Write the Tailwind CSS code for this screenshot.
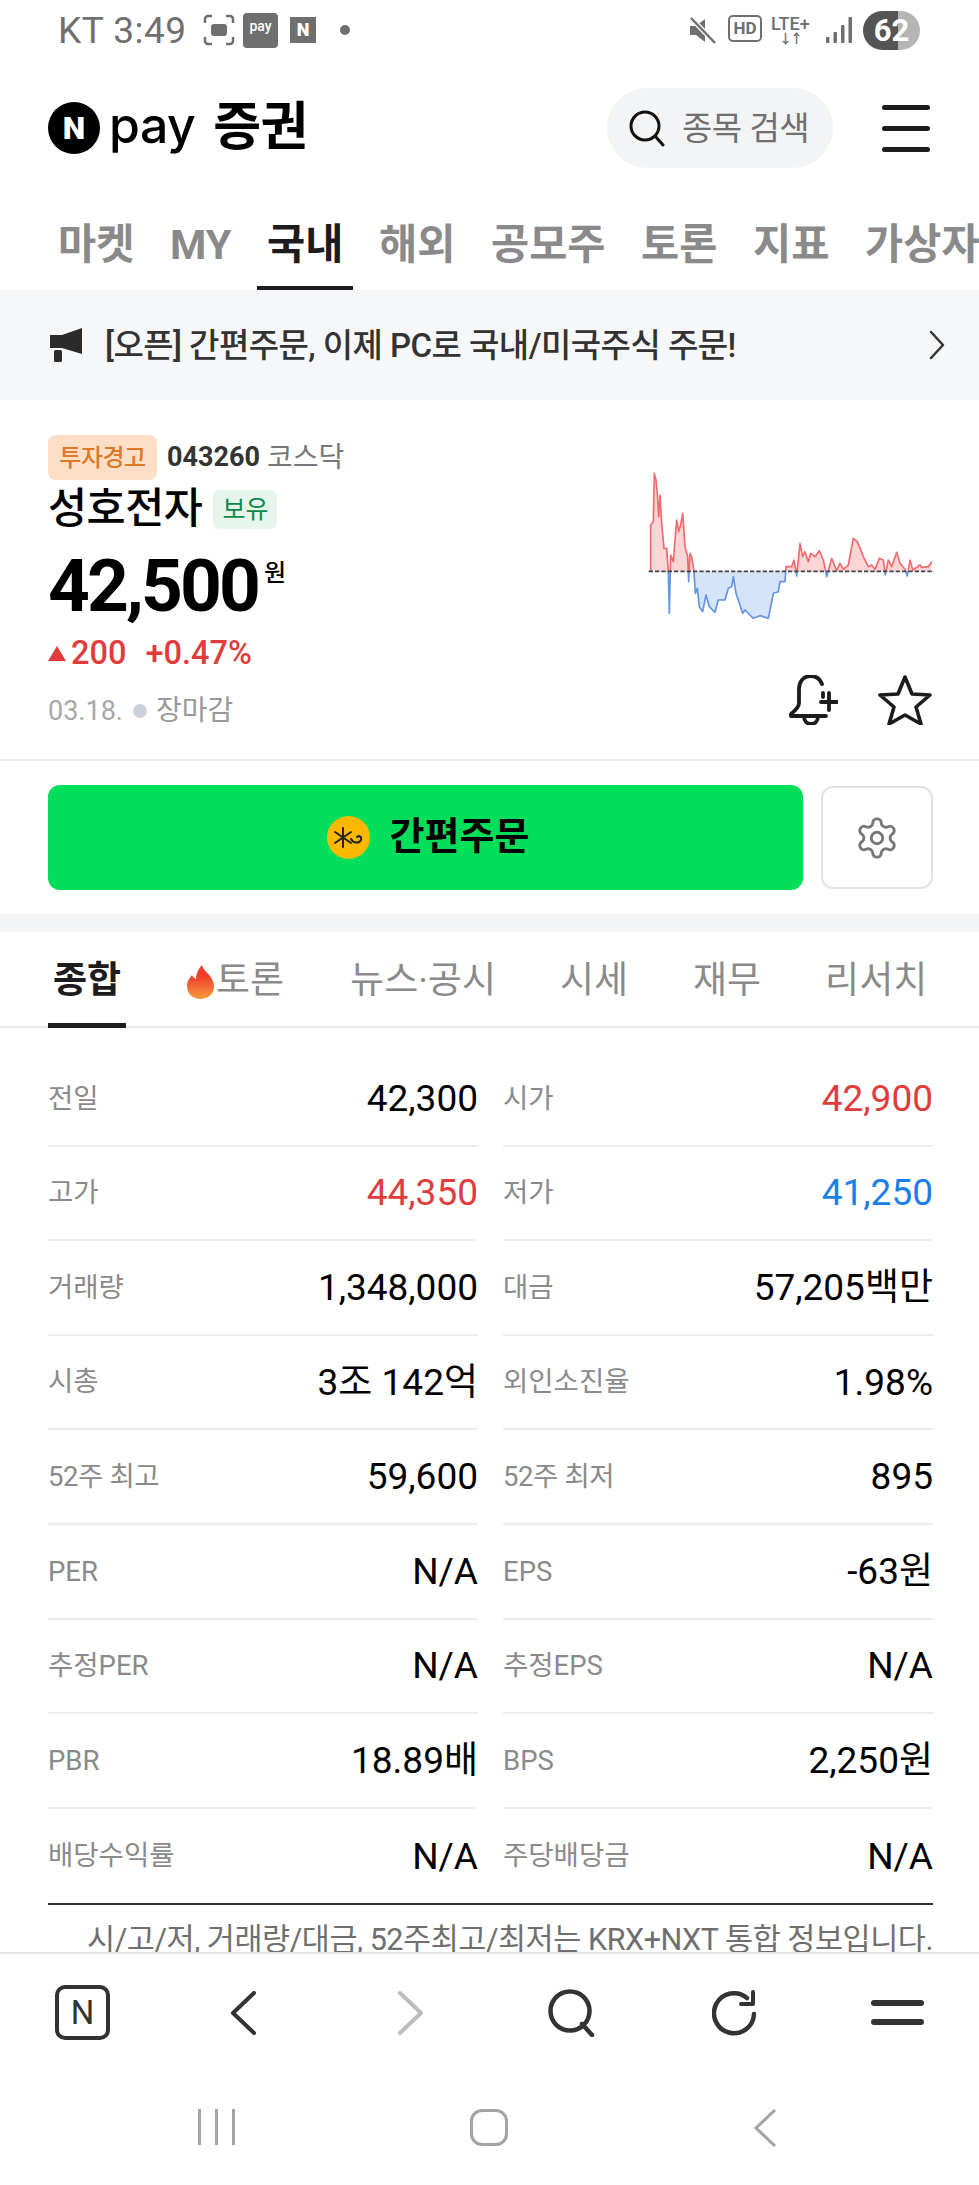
<!DOCTYPE html>
<html lang="ko">
<head>
    <meta charset="UTF-8">
    <meta name="viewport" content="width=device-width, initial-scale=1.0">
    <title>성호전자 - Npay 증권</title>
    <script src="https://cdn.jsdelivr.net/npm/@tailwindcss/browser@4"></script>
</head>
<body class="bg-white font-['Roboto','Noto_Sans_CJK_KR',sans-serif] text-black">
<div class="flex flex-col w-[979px] h-[2185px] overflow-hidden">

    <!-- status bar -->
    <div class="flex items-center justify-between h-[60px] pl-[58px] pr-[59px] text-[#6f6f6f] shrink-0">
        <div class="flex items-center">
            <span class="text-[37px] leading-none tracking-[0.5px] w-[145px] whitespace-nowrap">KT 3:49</span>
            <svg class="w-[32px] h-[32px]" viewBox="0 0 32 32" fill="none" stroke="#6f6f6f" stroke-width="2.5">
                <path d="M2 9V5a3 3 0 0 1 3-3h4M23 2h4a3 3 0 0 1 3 3v4M30 23v4a3 3 0 0 1-3 3h-4M9 30H5a3 3 0 0 1-3-3v-4"/>
                <rect x="8" y="10" width="16" height="12" rx="3" fill="#6f6f6f" stroke="none"/>
            </svg>
            <span class="flex items-start justify-center ml-[8px] w-[35px] h-[35px] pt-[6px] rounded-[4px] bg-[#6f6f6f] text-white text-[14px] leading-none font-medium">pay</span>
            <span class="flex items-center justify-center ml-[12px] w-[26px] h-[26px] bg-[#6f6f6f] text-white text-[18px] leading-none font-black">N</span>
            <span class="ml-[24px] w-[10px] h-[10px] rounded-full bg-[#6f6f6f]"></span>
        </div>
        <div class="flex items-center">
            <svg class="w-[27px] h-[27px]" viewBox="0 0 27 27" fill="none">
                <path d="M1 9h6l9-7v23l-9-7H1z" fill="#6f6f6f"/>
                <path d="M2 1l24 25" stroke="#fff" stroke-width="5"/>
                <path d="M2 1l24 25" stroke="#6f6f6f" stroke-width="2.5"/>
            </svg>
            <span class="relative flex items-center justify-center ml-[12px] w-[34px] h-[27px] mb-[3px] rounded-[5px] border-2 border-[#6f6f6f] text-[17px] leading-none font-bold">HD</span>
            <span class="relative ml-[9px] w-[46px] h-[30px] text-[18px] leading-none font-medium">LTE+<span class="absolute left-[8px] top-[17px] text-[13px] leading-none font-bold tracking-[-2px]">↓↑</span></span>
            <svg class="ml-[9px] w-[26px] h-[26px]" viewBox="0 0 26 26" fill="#6f6f6f">
                <rect x="0" y="20" width="3.5" height="6" rx="1"/>
                <rect x="7.5" y="15" width="3.5" height="11" rx="1"/>
                <rect x="15" y="8" width="3.5" height="18" rx="1"/>
                <rect x="22.5" y="0" width="3.5" height="26" rx="1"/>
            </svg>
            <span class="relative flex items-center justify-center ml-[11px] w-[57px] h-[39px] rounded-full bg-[linear-gradient(90deg,#555_61%,#b5b5b5_61%)] text-white text-[31px] leading-none font-bold">62</span>
        </div>
    </div>

    <!-- header -->
    <header class="flex items-center justify-between h-[136px] pl-[48px] pr-[49px] shrink-0">
        <div class="flex items-center">
            <span class="flex items-center justify-center w-[52px] h-[52px] rounded-full bg-black text-white text-[32px] leading-none font-black">N</span>
            <span class="ml-[9px] font-['Inter',sans-serif] text-[50px] leading-none font-medium tracking-[-0.5px] pb-[6px]">pay</span>
            <span class="ml-[18px] text-[52px] leading-none font-bold tracking-[-0.5px]">증권</span>
        </div>
        <div class="flex items-center">
            <div class="flex items-center w-[226px] h-[80px] pl-[21px] rounded-full bg-[#f3f4f6]">
                <svg class="w-[38px] h-[38px]" viewBox="0 0 38 38" fill="none" stroke="#111" stroke-width="3" stroke-linecap="round">
                    <circle cx="17" cy="17" r="14"/>
                    <path d="M27 27l8 9"/>
                </svg>
                <span class="ml-[16px] text-[33px] leading-none text-[#6f6f6f] tracking-[-0.5px]">종목 검색</span>
            </div>
            <div class="flex flex-col gap-[16px] ml-[49px] w-[48px]">
                <span class="h-[5px] rounded-full bg-[#1c1c1e]"></span>
                <span class="h-[5px] rounded-full bg-[#1c1c1e]"></span>
                <span class="h-[5px] rounded-full bg-[#1c1c1e]"></span>
            </div>
        </div>
    </header>

    <!-- top tabs -->
    <nav class="flex gap-[15.600px] h-[94px] pl-[48px] shrink-0 overflow-hidden text-[41.500px] leading-none font-bold text-[#8a8a8a] whitespace-nowrap">
        <a class="flex items-start px-[10px] pt-[28px]">마켓</a>
        <a class="flex items-start px-[10px] pt-[28px]">MY</a>
        <a class="flex items-start px-[10px] pt-[28px] h-[94px] border-b-[4px] border-[#1c1c1e] text-[#1c1c1e]">국내</a>
        <a class="flex items-start px-[10px] pt-[28px]">해외</a>
        <a class="flex items-start px-[10px] pt-[28px]">공모주</a>
        <a class="flex items-start px-[10px] pt-[28px]">토론</a>
        <a class="flex items-start px-[10px] pt-[28px]">지표</a>
        <a class="flex items-start px-[10px] pt-[28px]">가상자산</a>
    </nav>

    <!-- notice banner -->
    <div class="flex items-center justify-between h-[110px] pl-[50px] pr-[34px] bg-[#f6f7f9] shrink-0">
        <div class="flex items-center">
            <svg class="w-[32px] h-[34px]" viewBox="0 0 32 34" fill="#2b2b2b">
                <path d="M0 7h12L32 0v26l-20-6H0z"/>
                <rect x="4" y="22" width="8" height="12" rx="1.5"/>
            </svg>
            <span class="ml-[23px] text-[33px] leading-none font-medium text-[#333] tracking-[-0.55px]">[오픈] 간편주문, 이제 PC로 국내/미국주식 주문!</span>
        </div>
        <svg class="w-[16px] h-[30px]" viewBox="0 0 16 30" fill="none" stroke="#333" stroke-width="2.5" stroke-linecap="round" stroke-linejoin="round">
            <path d="M2 2l12 13L2 28"/>
        </svg>
    </div>

    <main class="flex-1 min-h-0 overflow-hidden">
        <!-- stock summary -->
        <section class="flex justify-between h-[361px] pl-[48px] border-b-2 border-[#eeeeee]">
            <div class="pt-[35px]">
                <div class="flex items-center">
                    <span class="flex items-center justify-center w-[109px] h-[45px] rounded-[8px] bg-[#fddfc7] text-[#e0782a] text-[24px] leading-none font-medium tracking-[-0.5px]">투자경고</span>
                    <span class="ml-[10px] text-[27px] leading-none font-bold text-[#333]">043260</span>
                    <span class="ml-[7px] text-[28px] leading-none text-[#777]">코스닥</span>
                </div>
                <div class="flex items-center mt-[8px]">
                    <span class="text-[42.500px] leading-[42px] font-medium tracking-[-0.5px]">성호전자</span>
                    <span class="flex items-center justify-center ml-[11px] w-[64px] h-[39px] rounded-[6px] bg-[#e6f6ec] text-[#0d8a4a] text-[25px] leading-none">보유</span>
                </div>
                <div class="flex items-start mt-[21px]">
                    <span class="text-[73px] leading-[70px] font-bold tracking-[-2.900px]">42,500</span>
                    <span class="ml-[6px] mt-[10px] text-[24px] leading-none font-medium">원</span>
                </div>
                <div class="flex items-center mt-[12px] text-[#e03c3c] text-[32.500px] leading-[40px] font-medium">
                    <svg class="w-[18px] h-[15px]" viewBox="0 0 18 15" fill="#e03c3c"><path d="M9 0l9 15H0z"/></svg>
                    <span class="ml-[5px]">200</span>
                    <span class="ml-[19px]">+0.47%</span>
                </div>
                <div class="flex items-center mt-[18px] text-[#a8a8a8] text-[27px] leading-[40px]">
                    <span>03.18.</span>
                    <span class="ml-[10px] w-[14px] h-[14px] rounded-full bg-[#ccd1d9]"></span>
                    <span class="ml-[9px] text-[28px] text-[#999]">장마감</span>
                </div>
            </div>
            <div class="w-[359px] pt-[50px]">
                <svg class="w-[330px] h-[170px]" viewBox="0 0 990 510" fill="none">
                    <defs>
                        <clipPath id="chart-up"><rect x="0" y="0" width="990" height="364"/></clipPath>
                        <clipPath id="chart-down"><rect x="0" y="364" width="990" height="146"/></clipPath>
                    </defs>
                    <g clip-path="url(#chart-up)">
                        <polygon fill="#fcd5d6" points="92,364 92,225 100,215 103,70 108,90 112,135 116,200 120,135 125,220 132,295 140,295 145,364 148,490 152,315 160,335 170,210 176,245 182,225 188,190 195,290 203,320 206,395 210,310 216,325 222,364 226,430 232,415 238,470 248,485 258,435 268,470 285,487 295,450 315,450 325,415 335,410 340,380 348,430 360,465 368,490 375,480 400,505 420,497 445,505 460,430 475,425 480,395 495,395 498,350 515,350 522,330 530,378 540,280 548,320 555,305 565,335 572,310 585,320 598,302 610,330 620,380 635,325 650,362 660,340 670,358 685,345 700,265 712,275 730,320 745,350 755,345 765,358 778,325 790,330 796,375 805,330 815,350 830,307 840,340 855,358 862,378 870,330 878,360 900,345 905,352 925,350 935,335 935,364"/>
                        <polyline stroke="#ee6b70" stroke-width="5" stroke-linejoin="round" points="92,364 92,225 100,215 103,70 108,90 112,135 116,200 120,135 125,220 132,295 140,295 145,364 148,490 152,315 160,335 170,210 176,245 182,225 188,190 195,290 203,320 206,395 210,310 216,325 222,364 226,430 232,415 238,470 248,485 258,435 268,470 285,487 295,450 315,450 325,415 335,410 340,380 348,430 360,465 368,490 375,480 400,505 420,497 445,505 460,430 475,425 480,395 495,395 498,350 515,350 522,330 530,378 540,280 548,320 555,305 565,335 572,310 585,320 598,302 610,330 620,380 635,325 650,362 660,340 670,358 685,345 700,265 712,275 730,320 745,350 755,345 765,358 778,325 790,330 796,375 805,330 815,350 830,307 840,340 855,358 862,378 870,330 878,360 900,345 905,352 925,350 935,335"/>
                    </g>
                    <g clip-path="url(#chart-down)">
                        <polygon fill="#d6e4f9" points="92,364 92,225 100,215 103,70 108,90 112,135 116,200 120,135 125,220 132,295 140,295 145,364 148,490 152,315 160,335 170,210 176,245 182,225 188,190 195,290 203,320 206,395 210,310 216,325 222,364 226,430 232,415 238,470 248,485 258,435 268,470 285,487 295,450 315,450 325,415 335,410 340,380 348,430 360,465 368,490 375,480 400,505 420,497 445,505 460,430 475,425 480,395 495,395 498,350 515,350 522,330 530,378 540,280 548,320 555,305 565,335 572,310 585,320 598,302 610,330 620,380 635,325 650,362 660,340 670,358 685,345 700,265 712,275 730,320 745,350 755,345 765,358 778,325 790,330 796,375 805,330 815,350 830,307 840,340 855,358 862,378 870,330 878,360 900,345 905,352 925,350 935,335 935,364"/>
                        <polyline stroke="#6495e2" stroke-width="5" stroke-linejoin="round" points="92,364 92,225 100,215 103,70 108,90 112,135 116,200 120,135 125,220 132,295 140,295 145,364 148,490 152,315 160,335 170,210 176,245 182,225 188,190 195,290 203,320 206,395 210,310 216,325 222,364 226,430 232,415 238,470 248,485 258,435 268,470 285,487 295,450 315,450 325,415 335,410 340,380 348,430 360,465 368,490 375,480 400,505 420,497 445,505 460,430 475,425 480,395 495,395 498,350 515,350 522,330 530,378 540,280 548,320 555,305 565,335 572,310 585,320 598,302 610,330 620,380 635,325 650,362 660,340 670,358 685,345 700,265 712,275 730,320 745,350 755,345 765,358 778,325 790,330 796,375 805,330 815,350 830,307 840,340 855,358 862,378 870,330 878,360 900,345 905,352 925,350 935,335"/>
                    </g>
                    <path d="M86 364H942" stroke="#444" stroke-width="5" stroke-dasharray="13 6"/>
                </svg>
                <div class="flex items-start mt-[55px] ml-[168px]">
                    <svg class="w-[50px] h-[50px]" viewBox="0 0 50 50" fill="none" stroke="#1c1c1e" stroke-width="3.800" stroke-linecap="round" stroke-linejoin="round">
                        <path d="M34 9c-2-5-6-8-11-8-8 0-12 6-12 13v14c0 4-3 7-8 11v2h35"/>
                        <path d="M35 22v-4"/>
                        <path d="M16 41c0 5 3 8 7 8s7-3 7-8"/>
                        <path d="M41 18v17M33 27h16"/>
                    </svg>
                    <svg class="ml-[40px] w-[54px] h-[50px]" viewBox="0 0 54 50" fill="none" stroke="#1c1c1e" stroke-width="3.600" stroke-linejoin="round">
                        <path d="M27 2l7 17 18 1-14 12 5 17-16-9-16 9 5-17L2 20l18-1z"/>
                    </svg>
                </div>
            </div>
        </section>

        <!-- order button -->
        <section class="flex items-start justify-between h-[153px] pt-[24px] pl-[48px] pr-[46px]">
            <button class="flex items-center justify-center w-[755px] h-[105px] pl-[5px] rounded-[12px] bg-[#00de5a]">
                <svg class="w-[43px] h-[43px]" viewBox="0 0 43 43">
                    <circle cx="21.5" cy="21.5" r="21.5" fill="#ffb800"/>
                    <path d="M16 12v19M8 16l16 11M8 27l16-11M24 23c2 4 8 5 10 1 1-3-2-5-4-3" fill="none" stroke="#222" stroke-width="2" stroke-linecap="round"/>
                </svg>
                <span class="ml-[20px] pb-[4px] text-[38px] leading-none font-bold">간편주문</span>
            </button>
            <button class="flex items-center justify-center mt-[1px] w-[112px] h-[103px] rounded-[12px] border-2 border-[#e2e3e6]">
                <svg class="w-[46px] h-[46px]" viewBox="0 0 24 24" fill="none" stroke="#777" stroke-width="1.5" stroke-linecap="round" stroke-linejoin="round">
                    <path d="M12.22 2h-.44a2 2 0 0 0-2 2v.18a2 2 0 0 1-1 1.73l-.43.25a2 2 0 0 1-2 0l-.15-.08a2 2 0 0 0-2.73.73l-.22.38a2 2 0 0 0 .73 2.73l.15.1a2 2 0 0 1 1 1.72v.51a2 2 0 0 1-1 1.74l-.15.09a2 2 0 0 0-.73 2.73l.22.38a2 2 0 0 0 2.73.73l.15-.08a2 2 0 0 1 2 0l.43.25a2 2 0 0 1 1 1.73V20a2 2 0 0 0 2 2h.44a2 2 0 0 0 2-2v-.18a2 2 0 0 1 1-1.73l.43-.25a2 2 0 0 1 2 0l.15.08a2 2 0 0 0 2.73-.73l.22-.39a2 2 0 0 0-.73-2.73l-.15-.08a2 2 0 0 1-1-1.74v-.5a2 2 0 0 1 1-1.74l.15-.09a2 2 0 0 0 .73-2.73l-.22-.38a2 2 0 0 0-2.73-.73l-.15.08a2 2 0 0 1-2 0l-.43-.25a2 2 0 0 1-1-1.73V4a2 2 0 0 0-2-2z"/>
                    <circle cx="12" cy="12" r="3"/>
                </svg>
            </button>
        </section>

        <div class="h-[18px] bg-[#f3f4f6]"></div>

        <!-- detail tabs -->
        <nav class="flex h-[96px] pl-[48px] border-b-2 border-[#eeeeee] text-[37px] leading-none text-[#8a8a8a] whitespace-nowrap">
            <a class="flex justify-center w-[78px] h-[96px] pt-[30px] border-b-[5px] border-[#1c1c1e] font-bold text-[#1c1c1e]">종합</a>
            <a class="flex items-start ml-[61px] pt-[30px]">
                <svg class="w-[27px] h-[34px] mt-[3px]" viewBox="0 0 27 34">
                    <defs>
                        <linearGradient id="flame" x1="0" y1="0" x2="0" y2="1">
                            <stop offset="0.3" stop-color="#ef3b2d"/>
                            <stop offset="1" stop-color="#fb9a3c"/>
                        </linearGradient>
                    </defs>
                    <path d="M15 0c1 5 5 7 8 11 3 4 4 8 4 10 0 8-6 13-13.500 13S0 29 0 21c0-5 3-8 5-11 1 2 2 3 4 4 0-5 2-10 6-14z" fill="url(#flame)"/>
                </svg>
                <span class="ml-[2px]">토론</span>
            </a>
            <a class="ml-[66px] pt-[30px]">뉴스·공시</a>
            <a class="ml-[64px] pt-[30px]">시세</a>
            <a class="ml-[65px] pt-[30px]">재무</a>
            <a class="ml-[64px] pt-[30px]">리서치</a>
        </nav>

        <!-- quote table -->
        <div class="grid grid-cols-2 gap-x-[25px] mt-[24px] mx-[46px] ml-[48px] pb-0 border-b-2 border-[#333] text-[37px] font-normal leading-none">
            <div class="flex items-center justify-between h-[94.600px] border-b-2 border-[#eeeeee]"><span class="text-[27.500px] text-[#8a8a8a]">전일</span><span>42,300</span></div>
            <div class="flex items-center justify-between h-[94.600px] border-b-2 border-[#eeeeee]"><span class="text-[27.500px] text-[#8a8a8a]">시가</span><span class="text-[#e03c3c]">42,900</span></div>
            <div class="flex items-center justify-between h-[94.600px] border-b-2 border-[#eeeeee]"><span class="text-[27.500px] text-[#8a8a8a]">고가</span><span class="text-[#e03c3c]">44,350</span></div>
            <div class="flex items-center justify-between h-[94.600px] border-b-2 border-[#eeeeee]"><span class="text-[27.500px] text-[#8a8a8a]">저가</span><span class="text-[#1a7fe8]">41,250</span></div>
            <div class="flex items-center justify-between h-[94.600px] border-b-2 border-[#eeeeee]"><span class="text-[27.500px] text-[#8a8a8a]">거래량</span><span>1,348,000</span></div>
            <div class="flex items-center justify-between h-[94.600px] border-b-2 border-[#eeeeee]"><span class="text-[27.500px] text-[#8a8a8a]">대금</span><span>57,205백만</span></div>
            <div class="flex items-center justify-between h-[94.600px] border-b-2 border-[#eeeeee]"><span class="text-[27.500px] text-[#8a8a8a]">시총</span><span>3조 142억</span></div>
            <div class="flex items-center justify-between h-[94.600px] border-b-2 border-[#eeeeee]"><span class="text-[27.500px] text-[#8a8a8a]">외인소진율</span><span>1.98%</span></div>
            <div class="flex items-center justify-between h-[94.600px] border-b-2 border-[#eeeeee]"><span class="text-[27.500px] text-[#8a8a8a] tracking-[-0.4px]">52주 최고</span><span>59,600</span></div>
            <div class="flex items-center justify-between h-[94.600px] border-b-2 border-[#eeeeee]"><span class="text-[27.500px] text-[#8a8a8a] tracking-[-0.4px]">52주 최저</span><span>895</span></div>
            <div class="flex items-center justify-between h-[94.600px] border-b-2 border-[#eeeeee]"><span class="text-[27.500px] text-[#8a8a8a]">PER</span><span>N/A</span></div>
            <div class="flex items-center justify-between h-[94.600px] border-b-2 border-[#eeeeee]"><span class="text-[27.500px] text-[#8a8a8a]">EPS</span><span>-63원</span></div>
            <div class="flex items-center justify-between h-[94.600px] border-b-2 border-[#eeeeee]"><span class="text-[27.500px] text-[#8a8a8a]">추정PER</span><span>N/A</span></div>
            <div class="flex items-center justify-between h-[94.600px] border-b-2 border-[#eeeeee]"><span class="text-[27.500px] text-[#8a8a8a]">추정EPS</span><span>N/A</span></div>
            <div class="flex items-center justify-between h-[94.600px] border-b-2 border-[#eeeeee]"><span class="text-[27.500px] text-[#8a8a8a]">PBR</span><span>18.89배</span></div>
            <div class="flex items-center justify-between h-[94.600px] border-b-2 border-[#eeeeee]"><span class="text-[27.500px] text-[#8a8a8a]">BPS</span><span>2,250원</span></div>
            <div class="flex items-center justify-between h-[94.600px]"><span class="text-[27.500px] text-[#8a8a8a]">배당수익률</span><span>N/A</span></div>
            <div class="flex items-center justify-between h-[94.600px]"><span class="text-[27.500px] text-[#8a8a8a]">주당배당금</span><span>N/A</span></div>
        </div>
        <p class="mt-[17px] pr-[46px] text-right text-[30.500px] leading-[36px] text-[#6f6f6f] tracking-[-0.45px] whitespace-nowrap">시/고/저, 거래량/대금, 52주최고/최저는 KRX+NXT 통합 정보입니다.</p>
    </main>

    <!-- browser toolbar -->
    <div class="h-[138px] pl-[55px] pt-[31px] border-t-2 border-[#e8e8e8] bg-white shrink-0">
        <div class="flex items-center h-[55px]">
            <span class="flex items-center justify-center w-[55px] h-[55px] rounded-[10px] border-[4px] border-[#333] text-[33px] leading-none text-[#333]">N</span>
            <svg class="ml-[120px] w-[26px] h-[44px]" viewBox="0 0 26 44" fill="none" stroke="#333" stroke-width="4" stroke-linecap="round" stroke-linejoin="round"><path d="M24 2L3 22l21 20"/></svg>
            <svg class="ml-[142px] w-[26px] h-[44px]" viewBox="0 0 26 44" fill="none" stroke="#bdbdbd" stroke-width="4" stroke-linecap="round" stroke-linejoin="round"><path d="M2 2l21 20L2 42"/></svg>
            <svg class="ml-[124px] w-[47px] h-[48px]" viewBox="0 0 47 48" fill="none" stroke="#333" stroke-width="4.500" stroke-linecap="round"><circle cx="22" cy="22" r="19.500"/><path d="M34 35l10 11"/></svg>
            <svg class="ml-[117px] w-[46px] h-[47px]" viewBox="0 0 46 47" fill="none" stroke="#333" stroke-width="4.500" stroke-linecap="round" stroke-linejoin="round"><path d="M42 25a20 20 0 1 1-7-16"/><path d="M41 3v12H29" stroke-width="4"/></svg>
            <div class="flex flex-col gap-[13px] ml-[113px] w-[53px]">
                <span class="h-[6px] rounded-full bg-[#333]"></span>
                <span class="h-[6px] rounded-full bg-[#333]"></span>
            </div>
        </div>
    </div>

    <!-- android navigation -->
    <div class="flex items-start h-[95px] pt-[19px] pl-[198px] bg-white shrink-0">
        <div class="flex gap-[14px]">
            <span class="w-[3px] h-[36px] bg-[#a3a3a3]"></span>
            <span class="w-[3px] h-[36px] bg-[#a3a3a3]"></span>
            <span class="w-[3px] h-[36px] bg-[#a3a3a3]"></span>
        </div>
        <span class="ml-[235px] w-[38px] h-[37px] rounded-[12px] border-[3px] border-[#a3a3a3]"></span>
        <svg class="ml-[245px] w-[24px] h-[38px]" viewBox="0 0 24 38" fill="none" stroke="#a3a3a3" stroke-width="3"><path d="M22 1L3 19l19 18"/></svg>
    </div>
</div>
</body>
</html>
